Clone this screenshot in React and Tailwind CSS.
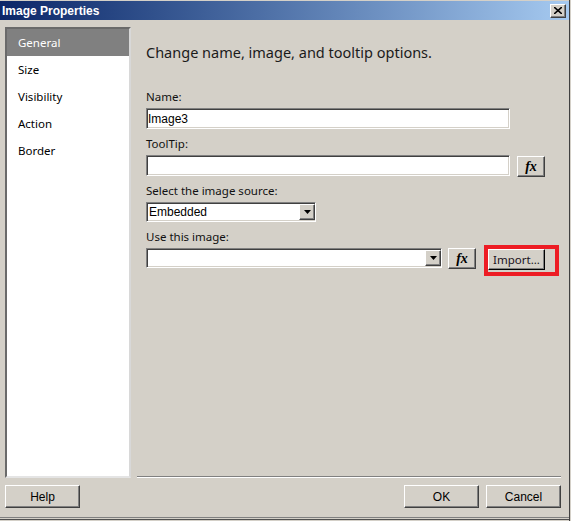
const raised =
  "border border-t-white border-l-white border-r-[#404040] border-b-[#404040] shadow-[inset_-1px_-1px_0_#808080] bg-[#d4d0c8]";
const sunken =
  "border border-t-[#808080] border-l-[#808080] border-r-white border-b-white shadow-[inset_1px_1px_0_#404040,inset_-1px_-1px_0_#d4d0c8] bg-white";

const uiFont = "font-['Noto_Sans',sans-serif]";
const classicFont = "font-['Liberation_Sans',Arial,sans-serif]";

const navItems = ["General", "Size", "Visibility", "Action", "Border"];

const FxButton = ({ className = "" }) => (
  <button
    className={`${raised} flex h-[21px] w-[28px] items-center justify-center font-['Liberation_Serif',serif] text-[14px] font-bold italic leading-none text-black ${className}`}
  >
    fx
  </button>
);

const Select = ({ value, width }) => (
  <div className={`${sunken} flex h-[20px] items-center ${width}`}>
    <span className={`flex-1 pl-[2px] ${classicFont} text-[12px] text-black`}>
      {value}
    </span>
    <div className={`${raised} flex h-[16px] w-[16px] items-center justify-center`}>
      <svg width="7" height="4" viewBox="0 0 7 4">
        <path d="M0 0h7L3.5 4z" fill="#000" />
      </svg>
    </div>
  </div>
);

const Label = ({ children, className = "" }) => (
  <div className={`h-[16px] ${uiFont} text-[11.5px] leading-[16px] text-[#111] ${className}`}>
    {children}
  </div>
);

const DialogButton = ({ children }) => (
  <button
    className={`${raised} h-[23px] w-[75px] ${classicFont} text-[12px] text-black`}
  >
    {children}
  </button>
);

export default function App() {
  return (
    <div className="flex h-[521px] w-[571px] flex-col bg-[#d4d0c8] shadow-[inset_-1px_0_0_#d4d0c8,inset_-2px_0_0_#404040]">
      {/* title bar */}
      <div className="mt-[1px] flex h-[19px] w-[569px] items-center justify-between bg-gradient-to-r from-[#0c2668] to-[#a6caf0] pl-[2px] pr-[3px]">
        <span className={`${classicFont} text-[12px] font-bold text-white`}>
          Image Properties
        </span>
        <button className={`${raised} flex h-[14px] w-[16px] items-center justify-center`}>
          <svg width="8" height="7" viewBox="0 0 8 7">
            <path d="M0 0l8 7M8 0L0 7" stroke="#000" strokeWidth="1.6" />
          </svg>
        </button>
      </div>

      <div className="flex w-[569px] flex-1 flex-col px-[5px] pt-[7px]">
        <div className="flex">
          {/* nav */}
          <div className="h-[451px] w-[126px] border-2 border-t-[#6a6a6a] border-l-[#6a6a6a] border-r-[#d8d8d8] border-b-[#e4e4e4] bg-white">
            {navItems.map((item, i) => (
              <div
                key={item}
                className={`h-[27px] pl-[11px] ${uiFont} text-[11.5px] leading-[27px] ${
                  i === 0 ? "h-[26px] bg-[#808080] text-white" : "text-black"
                }`}
              >
                {item}
              </div>
            ))}
          </div>

          {/* main */}
          <div className="flex h-[451px] flex-1 flex-col">
            <div className="flex flex-col pl-[15px]">
              <div
                className={`mt-[14px] h-[22px] ${uiFont} text-[14.5px] leading-[22px] text-[#1b1b1b]`}
              >
                Change name, image, and tooltip options.
              </div>

              <Label className="mt-[26px]">Name:</Label>
              <div className={`${sunken} mt-[3px] flex h-[21px] w-[364px] items-center pl-[1px] ${classicFont} text-[12px] text-black`}>
                Image3
              </div>

              <Label className="mt-[7px]">ToolTip:</Label>
              <div className="mt-[3px] flex items-start gap-[7px]">
                <div className={`${sunken} h-[21px] w-[364px]`} />
                <FxButton className="mt-[1px]" />
              </div>

              <Label className="mt-[6px]">Select the image source:</Label>
              <div className="mt-[3px]">
                <Select value="Embedded" width="w-[170px]" />
              </div>

              <Label className="mt-[7px]">Use this image:</Label>
              <div className="mt-[3px] flex items-start">
                <Select value="" width="w-[296px]" />
                <FxButton className="ml-[6px] w-[27px]" />
                <div className="-mt-[3px] ml-[8px] border-4 border-[#ed1c24] pb-[2px] pr-[10px]">
                  <button
                    className={`flex h-[21px] w-[57px] items-center justify-center border border-t-white border-l-white border-r-black border-b-black shadow-[inset_-1px_-1px_0_#808080] bg-[#d4d0c8] ${uiFont} text-[11.5px] text-[#1a1020]`}
                  >
                    Import...
                  </button>
                </div>
              </div>
            </div>

            <div className="flex-1" />
            <div className="ml-[6px] mr-[3px] h-[2px] border-t border-t-[#808080] border-b border-b-white" />
          </div>
        </div>

        {/* footer buttons */}
        <div className="mt-[7px] flex gap-[7px] pr-[3px]">
          <DialogButton>Help</DialogButton>
          <div className="flex-1" />
          <DialogButton>OK</DialogButton>
          <DialogButton>Cancel</DialogButton>
        </div>

        <div className="flex-1" />
      </div>

      <div className="h-[1px] w-[569px] bg-[#808080]" />
      <div className="h-[1px] w-[569px] bg-[#d4d0c8]" />
      <div className="h-[1px] w-[569px] bg-[#505050]" />
      <div className="h-[1px] w-[569px] bg-[#d4d0c8]" />
    </div>
  );
}
